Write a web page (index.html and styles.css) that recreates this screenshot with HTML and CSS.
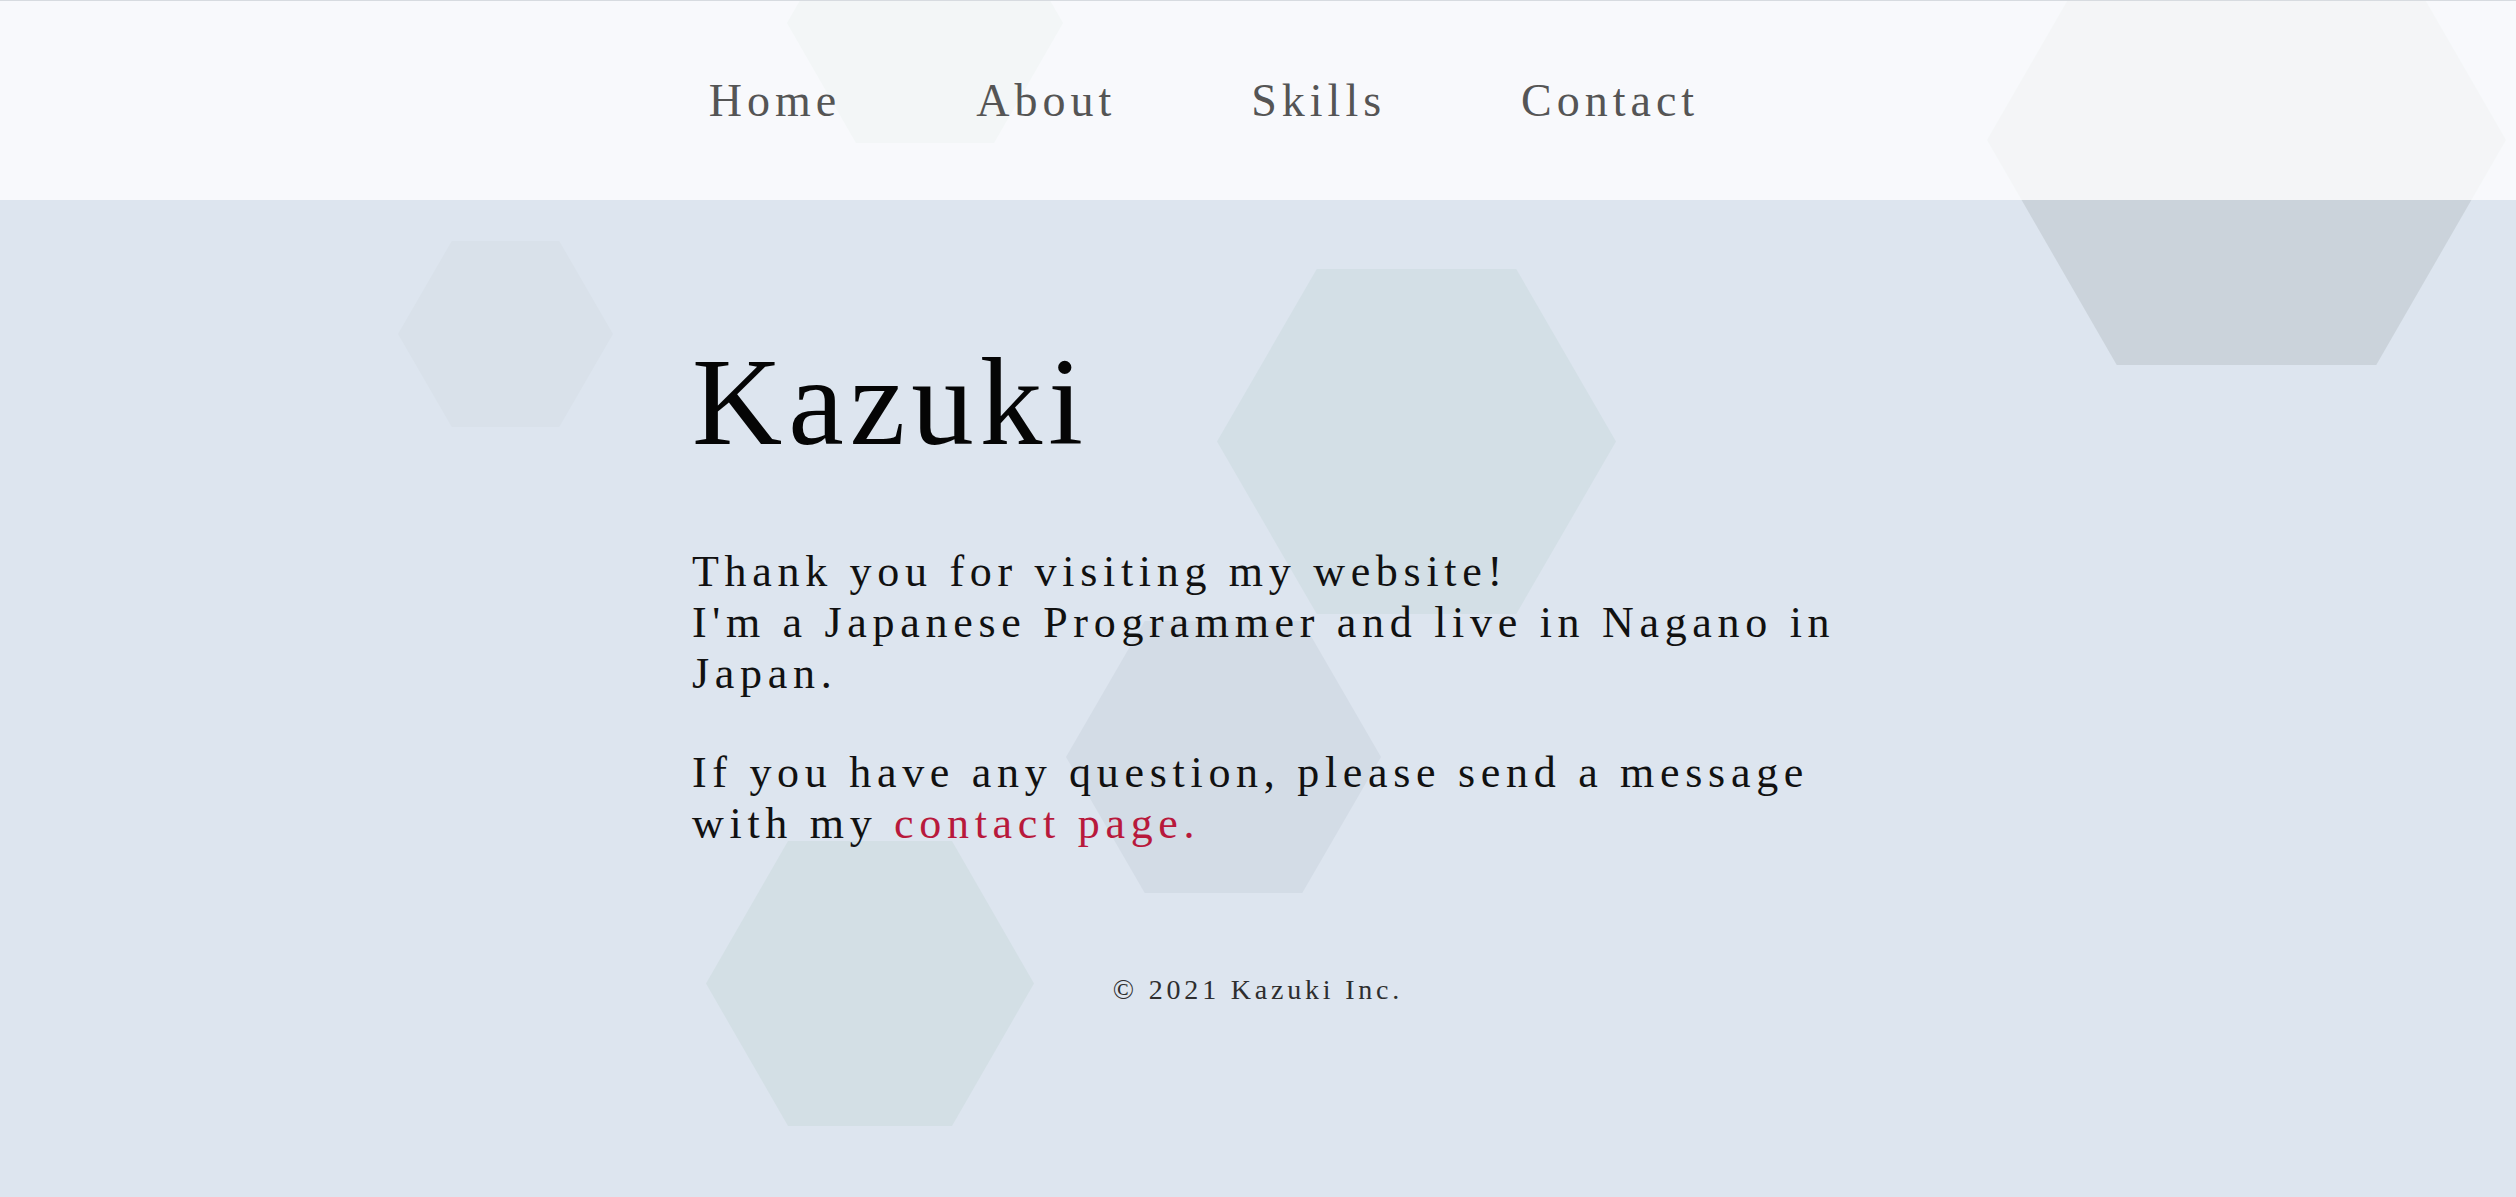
FILE: index.html
```html
<!DOCTYPE html>
<html lang="en">
<head>
<meta charset="utf-8">
<title>Kazuki</title>
<link rel="stylesheet" href="styles.css">
</head>
<body>
<div class="page">
  <div class="hexes" aria-hidden="true">
    <div class="hex hex-top"></div>
    <div class="hex hex-small"></div>
    <div class="hex hex-big"></div>
    <div class="hex hex-mid"></div>
    <div class="hex hex-low"></div>
    <div class="hex hex-corner"></div>
  </div>

  <header class="site-header">
    <nav class="nav">
      <ul class="nav-list">
        <li class="nav-item"><a class="nav-link" href="#">Home</a></li>
        <li class="nav-item"><a class="nav-link" href="#">About</a></li>
        <li class="nav-item"><a class="nav-link" href="#">Skills</a></li>
        <li class="nav-item"><a class="nav-link" href="#">Contact</a></li>
      </ul>
    </nav>
  </header>

  <main class="content">
    <h1 class="title">Kazuki</h1>
    <p class="intro intro-first">Thank you for visiting my website!<br>I'm a Japanese Programmer and live in Nagano in<br>Japan.</p>
    <p class="intro intro-second">If you have any question, please send a message<br>with my <a class="contact-link" href="#">contact page.</a></p>
  </main>

  <footer class="footer">© 2021 Kazuki Inc.</footer>
</div>
</body>
</html>
```

FILE: styles.css
```css
html {
  background: #dde5ef;
}

body {
  margin: 0;
  font-family: "Liberation Serif", "Times New Roman", serif;
  color: #0d0d0d;
}

.page {
  position: relative;
  min-height: 100vh;
  overflow: hidden;
}

/* decorative hexagons */
.hexes {
  position: absolute;
  inset: 0;
  z-index: 0;
  pointer-events: none;
}

.hex {
  position: absolute;
  clip-path: polygon(25% 0, 75% 0, 100% 50%, 75% 100%, 25% 100%, 0 50%);
}

.hex-top {
  left: 787px;
  top: -97px;
  width: 276px;
  height: 240px;
  background: #c6d5da;
}

.hex-small {
  left: 398px;
  top: 241px;
  width: 215px;
  height: 186px;
  background: #d9e1ea;
}

.hex-big {
  left: 1217px;
  top: 269px;
  width: 399px;
  height: 345px;
  background: #d3dfe6;
}

.hex-mid {
  left: 1066px;
  top: 621px;
  width: 315px;
  height: 272px;
  background: #d3dce6;
}

.hex-low {
  left: 706px;
  top: 841px;
  width: 328px;
  height: 285px;
  background: #d3dfe5;
}

.hex-corner {
  left: 1987px;
  top: -85px;
  width: 519px;
  height: 450px;
  background: #cbd3db;
}

/* header */
.site-header {
  position: relative;
  z-index: 1;
  height: 199px;
  border-top: 1px solid #d7dbe0;
  background: rgba(255, 255, 255, 0.78);
  display: flex;
  align-items: center;
  justify-content: center;
}

.nav {
  padding-right: 108px;
}

.nav-list {
  list-style: none;
  margin: 0;
  padding: 0;
  display: flex;
  gap: 135px;
}

.nav-link {
  font-size: 46px;
  letter-spacing: 5px;
  color: #555555;
  text-decoration: none;
}

/* main content */
.content {
  position: relative;
  z-index: 1;
  width: 1166px;
  margin: 0 auto;
  padding-left: 34px;
}

.title {
  margin: 140px 0 0;
  font-size: 125px;
  line-height: 125px;
  font-weight: normal;
  letter-spacing: 6px;
  color: #050505;
}

.intro {
  margin: 0;
  font-size: 44px;
  line-height: 51px;
  letter-spacing: 5.7px;
  color: #111111;
}

.intro-first {
  margin-top: 81px;
}

.intro-second {
  margin-top: 48px;
}

.contact-link {
  color: #b8193c;
  text-decoration: none;
}

.footer {
  position: relative;
  z-index: 1;
  margin-top: 121px;
  text-align: center;
  font-size: 28px;
  line-height: 40px;
  letter-spacing: 3.8px;
  color: #2e2e2e;
}
```
